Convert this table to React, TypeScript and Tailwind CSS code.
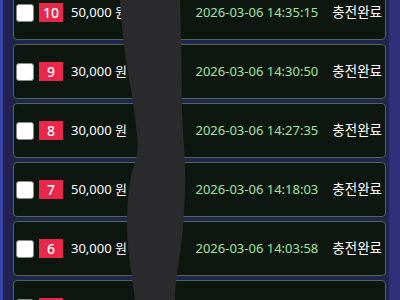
import React from "react";

interface ChargeRow {
  no: number;
  amount: string;
  date: string;
}

const rows: ChargeRow[] = [
  { no: 10, amount: "50,000", date: "2026-03-06 14:35:15" },
  { no: 9, amount: "30,000", date: "2026-03-06 14:30:50" },
  { no: 8, amount: "30,000", date: "2026-03-06 14:27:35" },
  { no: 7, amount: "50,000", date: "2026-03-06 14:18:03" },
  { no: 6, amount: "30,000", date: "2026-03-06 14:03:58" },
  { no: 5, amount: "30,000", date: "2026-03-06 13:58:12" },
];

const fontStyle = {
  fontFamily: '"Noto Sans", "Noto Sans CJK KR", sans-serif',
};

const App: React.FC = () => {
  return (
    <div
      className="relative w-[400px] h-[300px] overflow-hidden bg-[#23234f] flex"
      style={fontStyle}
    >
      <div className="w-[3px] h-full bg-[#3a46a6] shrink-0" />
      <div className="flex-1 pl-[10px] pr-[3px] -mt-[15px] flex flex-col gap-[4px]">
        {rows.map((item) => (
          <div
            key={item.no}
            className="h-[55px] shrink-0 rounded-[4px] border border-[#4a6a52] bg-[#0e170f] flex items-center pl-[2px] pr-[3px]"
          >
            <div className="w-[18px] h-[18px] rounded-[3px] bg-white border border-[#8a8a8a] shrink-0" />
            <div className="ml-[5px] w-[24px] h-[19px] bg-[#e8274b] text-white text-[14px] font-medium leading-none flex items-center justify-center shrink-0">
              {item.no}
            </div>
            <p className="ml-[8px] text-white text-[13px] leading-none whitespace-nowrap">
              {item.amount} 원
            </p>
            <p className="ml-auto text-[#a6e3a1] text-[13px] leading-none whitespace-nowrap">
              {item.date}
            </p>
            <p className="ml-[14px] text-white text-[13.5px] leading-none whitespace-nowrap">
              충전완료
            </p>
          </div>
        ))}
      </div>
      <div className="w-[11px] h-full bg-[#2f2f7a] shrink-0" />
      {/* redaction smear */}
      <svg
        className="absolute left-0 top-0 pointer-events-none"
        width="400"
        height="300"
        viewBox="0 0 400 300"
      >
        <path
          d="M120 0 L180 0 C181 40 182 80 182 110 C183 140 186 160 185 190 C184 220 182 245 178 265 C176 280 175 290 175 300 L135 300 C133 285 130 265 128 245 C126 215 128 185 133 168 C137 158 139 150 137 135 C135 110 130 85 126 60 C123 40 121 20 120 0 Z"
          fill="#2b2b2d"
        />
      </svg>
    </div>
  );
};

export default App;
